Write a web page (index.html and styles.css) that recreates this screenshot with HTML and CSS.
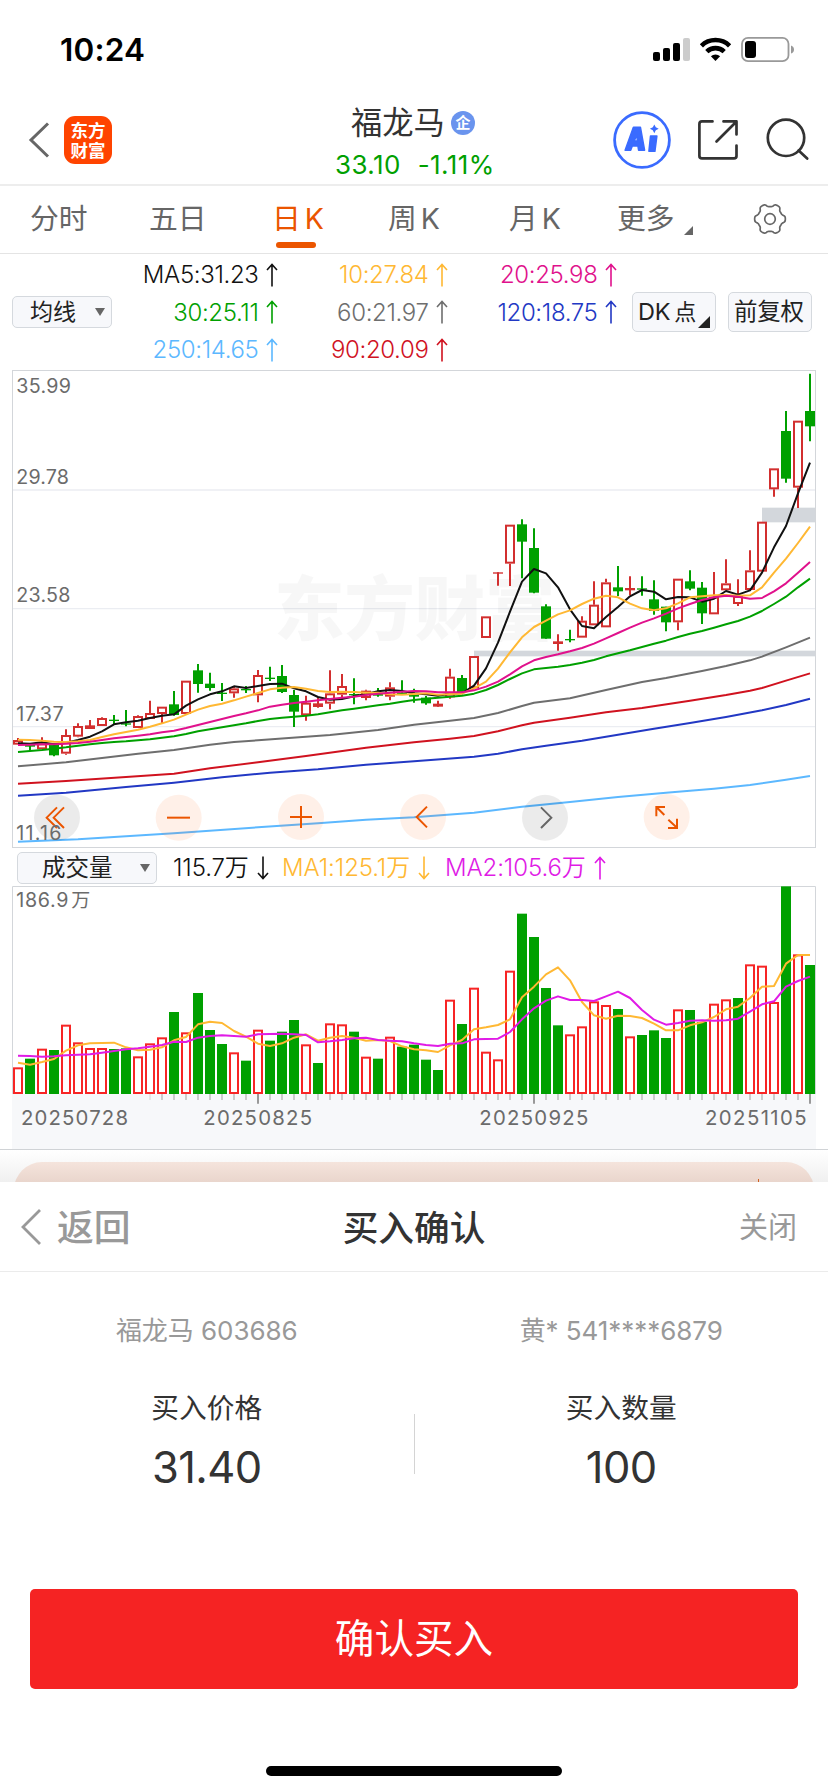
FILE: index.html
```html
<!DOCTYPE html>
<html lang="zh-CN">
<head>
<meta charset="utf-8">
<title>福龙马 买入确认</title>
<link rel="stylesheet" href="styles.css">
</head>
<body>
<svg class="defs" width="0" height="0" aria-hidden="true">
  <symbol id="up" viewBox="0 0 12 24"><path d="M6 23.5V1.5M1 7L6 1.5L11 7" fill="none" stroke="currentColor" stroke-width="1.6"/></symbol>
  <symbol id="down" viewBox="0 0 12 24"><path d="M6 .5V22.5M1 17L6 22.5L11 17" fill="none" stroke="currentColor" stroke-width="1.6"/></symbol>
</svg>

<header class="status">
  <span class="clock">10:24</span>
  <svg class="status-icons" width="144" height="30" viewBox="651 35 144 30">
    <rect x="653" y="52" width="7" height="9" rx="2"/>
    <rect x="663" y="48" width="7" height="13" rx="2"/>
    <rect x="673" y="43" width="7" height="18" rx="2"/>
    <rect x="683" y="38" width="7" height="23" rx="2" fill="#ccc"/>
    <g fill="none" stroke="#000" stroke-width="4.6">
      <path d="M701.4 45.8a20.2 20.2 0 0 1 28.2 0"/>
      <path d="M706.8 51.6a12.6 12.6 0 0 1 17.4 0"/>
    </g>
    <path d="M715.5 61l-4.6-4.7a6.6 6.6 0 0 1 9.2 0z"/>
    <rect x="742" y="37.8" width="46.5" height="23.4" rx="6" fill="none" stroke="#999" stroke-width="1.8"/>
    <rect x="745" y="41" width="11" height="17" rx="3"/>
    <path d="M791 45.5q3 1 3 4t-3 4z" fill="#999"/>
  </svg>
</header>

<nav class="topbar">
  <div class="topbar-left">
    <svg width="22" height="36" viewBox="0 0 22 36"><path d="M20 1.5L3 18L20 34.5" fill="none" stroke="#666" stroke-width="3"/></svg>
    <div class="brand">东方<br>财富</div>
  </div>
  <div class="quote">
    <div class="quote-name">福龙马<span class="badge">企</span></div>
    <div class="quote-price"><span>33.10</span><span>-1.11%</span></div>
  </div>
  <svg class="topbar-icons" width="200" height="60" viewBox="612 110 200 60">
    <circle cx="642" cy="140" r="27.4" fill="none" stroke="#3a6bff" stroke-width="2.8"/>
    <path fill="#3a6bff" stroke="#3a6bff" stroke-width="1.5" stroke-linejoin="round" fill-rule="evenodd" d="M633.4 127.2h7l4.2 23h-6l-.7-4.2h-5.600l-1.600 4.200h-5.600zM634.400 141h3l-.8-6.500zM650.500 136h6.400l-2 15.300h-6z"/>
    <path fill="#3a6bff" d="M654.300 124.400l1.500 2.900 2.900 1.500-2.900 1.500-1.500 2.900-1.500-2.900-2.900-1.500 2.900-1.500z"/>
    <g fill="none" stroke="#333" stroke-width="2.700" stroke-linecap="round" stroke-linejoin="round">
      <path d="M712.500 121.400H702q-2.600 0-2.600 2.600v32q0 2.400 2.600 2.400h32q2.500 0 2.500-2.400V145.500M723.500 121.400h13v13M736 122l-19.500 19.500"/>
      <circle cx="786" cy="137.800" r="18.200"/>
      <path d="M798.600 150.500l8.600 8"/>
    </g>
  </svg>
</nav>

<nav class="tabs">
  <span class="tab t1">分时</span>
  <span class="tab t2">五日</span>
  <span class="tab t3 active">日<i>K</i></span>
  <span class="tab t4">周<i>K</i></span>
  <span class="tab t5">月<i>K</i></span>
  <span class="tab t6">更多<svg width="9" height="9" viewBox="0 0 9 9"><path d="M9 0v9H0z" fill="#666"/></svg></span>
  <svg class="gear" width="34" height="34" viewBox="-17 -17 34 34" fill="none" stroke="#666" stroke-width="1.7" stroke-linejoin="round">
    <path id="gear-path" d=""/>
    <circle r="5.300"/>
  </svg>
</nav>

<section class="ma">
  <div class="select small">均线<span class="caret"></span></div>
  <div class="ma-grid">
    <span class="c-black">MA5:31.23<svg><use href="#up"/></svg></span>
    <span class="c-yellow">10:27.84<svg><use href="#up"/></svg></span>
    <span class="c-pink">20:25.98<svg><use href="#up"/></svg></span>
    <span class="c-green">30:25.11<svg><use href="#up"/></svg></span>
    <span class="c-gray">60:21.97<svg><use href="#up"/></svg></span>
    <span class="c-blue">120:18.75<svg><use href="#up"/></svg></span>
    <span class="c-sky">250:14.65<svg><use href="#up"/></svg></span>
    <span class="c-red">90:20.09<svg><use href="#up"/></svg></span>
  </div>
  <div class="chips">
    <div class="chip">DK<b>点</b><svg class="corner" width="12" height="12" viewBox="0 0 12 12"><path d="M12 0v12H0z" fill="#222"/></svg></div>
    <div class="chip">前复权</div>
  </div>
</section>

<svg class="price" id="price" width="804" height="478" viewBox="36 30 2412 1434"></svg>

<section class="volbar">
  <div class="select wide">成交量<span class="caret"></span></div>
  <span class="v0 c-black">115.7万<svg><use href="#down"/></svg></span>
  <span class="v1 c-yellow">MA1:125.1万<svg><use href="#down"/></svg></span>
  <span class="v2 c-magenta">MA2:105.6万<svg><use href="#up"/></svg></span>
</section>

<svg class="volume" id="volume" width="804" height="263" viewBox="36 138 2412 789"></svg>

<div class="behind"><div class="promo"><span></span></div></div>

<section class="sheet">
  <div class="sheet-head">
    <div class="back"><svg width="22" height="36" viewBox="0 0 22 36"><path d="M20 1L3 18L20 35" fill="none" stroke="#999" stroke-width="2.800"/></svg>返回</div>
    <div class="sheet-title">买入确认</div>
    <div class="close">关闭</div>
  </div>
  <div class="order">
    <div class="col">
      <div class="account">福龙马 603686</div>
      <div class="label">买入价格</div>
      <div class="value">31.40</div>
    </div>
    <div class="rule"></div>
    <div class="col">
      <div class="account">黄* 541****6879</div>
      <div class="label">买入数量</div>
      <div class="value">100</div>
    </div>
  </div>
  <div class="confirm">确认买入</div>
  <div class="home"></div>
</section>
<script src="chart.js"></script>
</body>
</html>
```
FILE: styles.css
```css
* { box-sizing: border-box; }
body {
  margin: 0;
  width: 828px;
  height: 1792px;
  overflow: hidden;
  background: #fff;
  color: #333;
  font-family: Inter, "Noto Sans CJK SC", sans-serif;
  display: flex;
  flex-direction: column;
}
svg { display: block; flex: none; }
.defs { position: absolute; }

.status {
  height: 90px;
  padding: 10px 33px 0 60px;
  display: flex;
  justify-content: space-between;
  align-items: center;
  flex: none;
}
.clock { font-size: 31.5px; font-weight: 600; color: #000; letter-spacing: .2px; line-height: 40px; }

.topbar {
  height: 96px;
  flex: none;
  border-bottom: 2px solid #ededed;
  display: grid;
  grid-template-columns: 300px 1fr 216px;
}
.topbar-left { display: flex; align-items: center; gap: 14px; padding: 4px 0 0 28px; }
.brand {
  width: 48px;
  height: 48px;
  padding-top: 4px;
  border-radius: 11px;
  background: #ff4400;
  color: #fff;
  font: 700 17.5px/20px "Noto Sans CJK SC", sans-serif;
  text-align: center;
}
.quote { padding-top: 12px; }
.quote-name {
  height: 42px;
  padding-left: 51px;
  display: flex;
  align-items: center;
  gap: 6px;
  font-size: 31.3px;
  line-height: 42px;
}
.badge {
  width: 24px;
  height: 24px;
  border-radius: 50%;
  background: #6a94ee;
  color: #fff;
  font-size: 15px;
  font-weight: 700;
  line-height: 23px;
  text-align: center;
}
.quote-price { padding-left: 35px; display: flex; gap: 17px; font-size: 26px; line-height: 40px; height: 40px; margin-top: 1px; color: #00a000; letter-spacing: 0.4px; }
.topbar-icons { margin-top: 20px; }

.tabs {
  height: 68px;
  flex: none;
  border-bottom: 1px solid #e4e4e4;
  display: flex;
  align-items: flex-start;
  padding: 12px 0 0 30px;
  font-size: 28.8px;
  line-height: 42px;
  color: #666;
}
.tab { display: flex; height: 52px; position: relative; flex: none; }
.tab i { font-style: normal; margin-left: 4px; font-size: 28.5px; }
.t1 { width: 119px; }
.t2 { width: 123px; }
.t3 { width: 116px; }
.t4 { width: 121px; }
.t5 { width: 108px; }
.t6 { width: 136px; }
.t6 svg { margin: 28px 0 0 9px; }
.active { color: #eb5500; }
.active::after { content: ""; position: absolute; left: 4px; top: 44px; width: 40px; height: 6px; border-radius: 3px; background: #eb5500; }
.gear { margin-top: 4px; }

.ma { height: 116px; flex: none; display: flex; padding-left: 12px; }
.select {
  border: 1.5px solid #d5d9de;
  border-radius: 5px;
  background: #f7f8fb;
  color: #222;
  display: flex;
  align-items: center;
  justify-content: space-between;
  flex: none;
}
.small { width: 100px; height: 32px; margin-top: 42px; padding: 0 6px 0 17px; font-size: 23px; line-height: 30px; }
.wide { width: 140px; height: 32px; padding: 0 6px 0 24px; font-size: 23.500px; line-height: 30px; margin-right: 16px; }
.caret { border-left: 5px solid transparent; border-right: 5px solid transparent; border-top: 8px solid #666; }
.ma-grid {
  display: grid;
  grid-template-columns: 166px 170px 169px;
  grid-template-rows: repeat(3, 37.500px);
  padding-top: 2px;
  font-size: 24px;
  font-weight: 350;
  letter-spacing: -.35px;
  width: 505px;
  flex: none;
}
.ma-grid span { display: flex; justify-content: flex-end; align-items: center; gap: 7.500px; }
.ma-grid svg, .volbar span svg { width: 12px; height: 24px; }
.chips { display: flex; gap: 12px; padding: 38px 0 0 15px; }
.chip {
  position: relative;
  width: 84px;
  height: 40px;
  border: 1.500px solid #d5d9de;
  border-radius: 5px;
  background: #f7f8fb;
  color: #222;
  font-size: 23.500px;
  line-height: 38px;
  padding-left: 5px;
  letter-spacing: -.3px;
  white-space: nowrap;
}
.chip b { font-weight: 400; font-size: 22px; margin-left: 4px; }
.corner { position: absolute; right: 5px; bottom: 3px; }

.c-black { color: #111; }
.c-yellow { color: #ffb833; }
.c-pink { color: #e0118c; }
.c-green { color: #00a000; }
.c-gray { color: #6e6e6e; }
.c-blue { color: #2238c4; }
.c-sky { color: #5cb8ff; }
.c-red { color: #d0121f; }
.c-magenta { color: #e01be6; }

.price, .volume { margin-left: 12px; }
.price text, .volume text { font-family: Inter, "Noto Sans CJK SC", sans-serif; fill: #6b6b6b; }
.price .watermark { font-family: "Noto Sans CJK SC", sans-serif; font-weight: 900; fill: #000; fill-opacity: .032; }

.volbar { height: 38px; flex: none; padding: 1px 0 0 17px; display: flex; align-items: center; font-size: 24px; line-height: 36px; font-weight: 350; letter-spacing: -.1px; }
.volbar .select { font-weight: 400; letter-spacing: 0; }
.volbar span:not(.caret) { display: flex; align-items: center; gap: 8px; }
.v0 { width: 109px; }
.v1 { width: 163px; }

.behind {
  height: 33px;
  flex: none;
  border-top: 1.500px solid #d0d3d6;
  padding: 11.500px 14px 0;
  overflow: hidden;
  background: linear-gradient(#fff, #f0f0f0);
}
.promo { height: 60px; border-radius: 28px; background: linear-gradient(#f5e4dc, #e8d4cb 22px); padding: 17px 0 0 744px; }
.promo span { display: block; width: 1px; height: 8px; background: #d06020; }

.sheet { height: 610px; flex: none; background: #fff; display: flex; flex-direction: column; align-items: center; }
.sheet-head {
  width: 100%;
  height: 90px;
  border-bottom: 1.500px solid #ebebeb;
  display: grid;
  grid-template-columns: 1fr auto 1fr;
  align-items: center;
  padding: 2px 31px 0 20px;
}
.back { display: flex; align-items: center; gap: 15px; color: #999; font-size: 36.800px; font-weight: 500; line-height: 50px; }
.back svg { margin-top: -2px; }
.sheet-title { font-size: 35.700px; font-weight: 500; line-height: 50px; margin-left: 11px; }
.close { justify-self: end; color: #999; font-size: 29px; line-height: 44px; }
.order { width: 100%; display: flex; height: 227px; padding-top: 39px; }
.col { flex: 1; display: flex; flex-direction: column; align-items: center; }
.account { font-size: 26px; line-height: 40px; color: #999; white-space: pre; letter-spacing: -.05px; }
.label { font-size: 27.700px; line-height: 40px; margin-top: 37px; }
.value { font-size: 43.500px; line-height: 60px; margin-top: 9px; letter-spacing: -.6px; }
.rule { width: 1px; height: 60px; margin-top: 103px; background: #d4d4d4; }
.confirm {
  width: 768px;
  height: 100px;
  margin-top: 90px;
  border-radius: 5px;
  background: #f52323;
  color: #fff;
  font-size: 39.600px;
  line-height: 100px;
  text-align: center;
}
.home { width: 296px; height: 10px; border-radius: 5px; background: #000; margin-top: 77px; }
```
FILE: chart.js
```js
const GREEN = '#00a000', RED = '#d22f2f', VRED = '#f72525';
const cx = i => 54 + 36 * i;
const rect = (x, y, w, h, attrs) => `<rect x="${x}" y="${y}" width="${w}" height="${h}" ${attrs}/>`;
const line = (x1, y1, x2, y2, c, w) => `<path d="M${x1} ${y1}L${x2} ${y2}" stroke="${c}" stroke-width="${w}"/>`;
const poly = (pts, c) => `<polyline points="${pts.map(p => p.join(',')).join(' ')}" fill="none" stroke="${c}" stroke-width="6" stroke-linejoin="round"/>`;
const series = (ys, c) => poly(ys.map((y, i) => [cx(i), y]), c);
const sparse = (ps, c) => poly(ps.map(([i, y]) => [cx(i), y]), c);
const label = (x, y, s, size, len) => `<text x="${x}" y="${y}" font-size="${size}" textLength="${len}">${s}</text>`;

// direction, high, body top, body bottom, low
const candles = [
['R',1134,1140,1154,1154],['G',1150,1155,1160,1172],['R',1132,1150,1168,1168],['G',1150,1155,1186,1189],
['R',1108,1125,1181,1184],['R',1090,1098,1130,1132],['R',1080,1096,1107,1107],['R',1072,1074,1098,1098],
['G',1065,1079,1083,1092],['G',1050,1090,1094,1099],['R',1066,1068,1104,1104],['R',1022,1059,1077,1077],
['R',1040,1040,1062,1092],['G',993,1033,1065,1067],['R',962,962,1062,1062],['G',912,931,972,998],
['G',938,971,984,992],['G',969,998,1002,1023],['R',980,985,1000,1013],['G',978,987,991,999],
['R',930,945,1006,1027],['G',920,953,957,963],['G',915,948,996,999],['G',990,1005,1055,1101],
['R',1007,1028,1066,1082],['R',1014,1030,1041,1043],['R',931,1000,1031,1048],['R',942,978,1004,1018],
['G',955,1002,1006,1033],['R',989,992,1014,1021],['G',984,1002,1007,1010],['R',967,982,1010,1021],
['G',961,998,1002,1005],['G',986,1005,1010,1028],['G',1008,1013,1030,1034],['R',1022,1031,1040,1040],
['R',926,950,1012,1016],['G',945,954,996,998],['R',888,888,985,985],['R',769,769,834,834],
['R',637,637,641,677],['R',494,494,611,678],['G',478,493,545,655],['G',505,564,698,700],
['G',733,739,836,836],['R',823,844,852,872],['G',809,837,841,847],['R',769,782,833,833],
['R',664,734,796,796],['R',656,667,802,802],['G',618,682,694,708],['R',649,684,691,706],
['G',649,685,689,707],['G',661,718,753,764],['G',740,740,787,814],['R',656,656,787,811],
['G',631,664,686,691],['G',666,683,760,792],['R',636,710,763,763],['R',598,670,691,691],
['R',658,708,732,738],['R',571,631,690,690],['R',485,485,635,635],['R',325,325,388,410],
['G',153,213,356,368],['R',182,182,383,444],['G',41,153,199,244]];

const ma5 = [1150,1151,1147,1153,1148,1140,1130,1114,1093,1087,1082,1074,1067,1063,1037,1018,1003,994,979,984,978,972,971,985,994,1011,1019,1017,1009,1002,994,990,993,1000,1003,1007,1001,1000,977,925,848,755,665,627,640,682,748,798,805,771,741,709,690,695,718,711,712,725,716,693,704,691,638,562,498,400,308];
const ma10 = [1139,1140,1142,1145,1146,1144,1140,1131,1123,1116,1109,1100,1090,1079,1064,1049,1038,1031,1021,1010,999,988,983,981,986,993,996,995,996,998,998,1003,1004,1002,1000,1004,1002,1001,985,965,926,877,832,801,782,763,751,732,716,707,712,731,745,751,745,730,712,709,706,705,707,706,682,638,596,549,500];
const ma20 = [1155,1154,1153,1153,1151,1149,1145,1140,1135,1131,1127,1123,1117,1112,1104,1095,1086,1077,1068,1060,1051,1040,1034,1029,1025,1021,1017,1013,1010,1005,1001,998,995,993,994,997,997,997,991,980,965,943,919,901,891,883,874,864,851,835,819,803,788,775,761,745,732,720,712,707,710,716,714,694,670,638,606];
const ma30 = [1176,1173,1170,1166,1162,1157,1153,1149,1146,1144,1141,1138,1133,1129,1122,1114,1108,1102,1096,1090,1083,1077,1073,1070,1067,1063,1057,1051,1046,1041,1036,1031,1025,1020,1016,1013,1010,1007,1001,990,975,957,940,928,924,920,915,908,900,889,880,871,861,851,842,831,821,813,803,793,783,770,753,732,710,682,656];
const ma60 = [[0,1219],[4,1207],[7,1194],[10,1181],[13,1170],[16,1154],[18,1146],[20,1141],[26,1125],[30,1110],[33,1094],[36,1082],[38,1074],[40,1059],[42,1038],[43,1028],[46,1015],[49,990],[52,966],[54,954],[57,933],[59,918],[61,901],[62,890],[64,862],[66,833]];
const ma90 = [[0,1271],[4,1263],[9,1251],[13,1241],[16,1225],[20,1207],[24,1188],[29,1163],[33,1147],[36,1136],[38,1128],[40,1114],[42,1096],[43,1088],[46,1073],[49,1057],[52,1044],[56,1022],[59,1005],[61,992],[62,984],[64,962],[66,940]];
const ma120 = [[0,1307],[4,1298],[9,1281],[13,1268],[17,1252],[21,1238],[25,1228],[29,1214],[33,1204],[38,1190],[40,1181],[42,1168],[44,1157],[47,1142],[50,1124],[53,1106],[56,1089],[59,1071],[62,1051],[64,1035],[66,1016]];
const ma250 = [[0,1445],[5,1438],[13,1420],[20,1402],[25,1390],[29,1379],[33,1372],[38,1358],[42,1340],[46,1326],[50,1311],[54,1298],[58,1286],[61,1275],[64,1259],[66,1248]];

let p = '';
for (const y of [390, 746, 1100]) p += line(37, y, 2446, y, '#ebedf2', 4);
p += '<text class="watermark" x="822" y="824" font-size="212" textLength="844">东方财富</text>';
p += rect(1422, 872, 1024, 17, 'fill="#d3d7dc"') + rect(2286, 443, 160, 44, 'fill="#d3d7dc"');
candles.forEach(([d, hi, top, bot, lo], i) => {
  const x = cx(i), c = d === 'R' ? RED : GREEN;
  if (d === 'R' && bot - top > 12) {
    p += line(x, hi, x, top, c, 6) + line(x, bot, x, lo, c, 6);
    p += rect(x - 12, top + 3, 24, bot - top - 6, `fill="#fff" stroke="${c}" stroke-width="6"`);
  } else {
    p += line(x, hi, x, lo, c, 6) + rect(x - 15, top, 30, bot - top, `fill="${c}"`);
  }
});
p += sparse(ma250, '#5cb8ff') + sparse(ma120, '#2238c4') + sparse(ma90, '#d0121f') + sparse(ma60, '#6e6e6e');
p += series(ma5, '#111') + series(ma10, '#ffb833') + series(ma20, '#e0118c') + series(ma30, '#00a000');

const buttons = [
  [171, 1373, 1, '#eb5500', 'M0 -31L-31 0L0 31M21 -31L-10 0L21 31'],
  [536, 1373, 0, '#eb5500', 'M-35 0H34'],
  [903, 1371, 0, '#eb5500', 'M-33 0H33M0 -33V33'],
  [1269, 1371, 0, '#eb5500', 'M12 -31L-19 0L12 31'],
  [1635, 1373, 1, '#666', 'M-12 -31L19 0L-12 31'],
  [2000, 1371, 0, '#eb5500', 'M-31 -2V-30H-5M-31 -30L-7 -6M5 8L31 32M31 5V33H4']];
for (const [x, y, gray, c, d] of buttons) {
  p += `<circle cx="${x}" cy="${y}" r="69" fill="${gray ? '#000' : '#ff6a20'}" fill-opacity="${gray ? .08 : .1}"/>`;
  p += `<path transform="translate(${x} ${y})" d="${d}" fill="none" stroke="${c}" stroke-width="6"/>`;
}
p += label(49, 98, '35.99', 59, 164) + label(49, 371, '29.78', 59, 158) + label(49, 727, '23.58', 59, 162);
p += label(49, 1083, '17.37', 59, 142) + label(49, 1440, '11.16', 59, 135);
p += rect(37.5, 31.5, 2409, 1431, 'fill="none" stroke="#d3d6da" stroke-width="3"');
document.getElementById('price').innerHTML = p;

const vols = 'R682 G656 R626 G630 R554 R607 R624 R624 G627 G625 R649 R610 R592 G516 R577 G459 G570 G612 R637 G662 R569 G602 G575 G540 R613 G669 R550 R553 G575 R650 G656 R590 G620 G614 G659 G690 R479 G552 R443 R635 R658 R392 G221 G291 G444 G556 R583 R559 R484 R495 G507 R589 G585 G571 G594 R508 G510 G546 R491 R478 G474 R373 R377 R486 G139 R343 G375'.split(' ');
const vma1 = [668,674,666,657,632,616,610,609,608,622,631,629,622,601,591,553,545,549,573,590,611,618,610,593,583,602,593,588,593,602,600,603,619,628,631,636,616,600,568,562,555,538,472,440,403,382,421,486,526,536,527,528,534,551,571,571,556,547,531,508,500,474,440,438,371,345,345];
const vma2 = [647,648,650,649,646,644,643,638,633,628,625,620,615,605,606,593,588,586,588,590,583,582,581,583,585,607,604,600,595,593,600,602,604,610,615,618,611,610,598,597,596,576,538,505,482,469,480,480,483,469,455,474,510,539,554,549,542,541,542,541,536,515,493,484,440,423,410];

let v = rect(36, 762, 2412, 165, 'fill="#f7f8fa"');
v += '<path d="M37.5 762V139.5H2446.5V762" fill="none" stroke="#d3d6da" stroke-width="3"/>';
vols.forEach((s, i) => {
  const y = +s.slice(1), x = cx(i);
  v += s[0] === 'R'
    ? rect(x - 12, y + 3, 24, 756 - y, `fill="#fff" stroke="${VRED}" stroke-width="6"`)
    : rect(x - 15, y, 30, 762 - y, `fill="${GREEN}"`);
  const major = i === 20 || i === 43 || i === 66;
  if (i > 10) v += line(x, 762, x, major ? 791 : 780, major ? '#999' : i === 11 ? '#e6e6e6' : '#ccc', 6);
});
v += series(vma1, '#ffb833') + series(vma2, '#e01be6');
v += label(49, 201, '186.9', 59, 156) + '<text x="214" y="201" font-size="57">万</text>';
v += label(63, 854, '20250728', 61, 321) + label(610, 854, '20250825', 61, 326);
v += label(1438, 854, '20250925', 61, 327) + label(2115, 854, '20251105', 61, 305);
document.getElementById('volume').innerHTML = v;

// six-lobed gear outline
let g = '';
for (let a = 0; a < 360; a += 3) {
  const t = a * Math.PI / 180, w = Math.cos(6 * t);
  const r = 13.9 + 1.5 * Math.tanh(2 * w);
  g += (a ? 'L' : 'M') + (r * Math.cos(t)).toFixed(2) + ' ' + (r * Math.sin(t)).toFixed(2);
}
document.getElementById('gear-path').setAttribute('d', g + 'Z');
```
